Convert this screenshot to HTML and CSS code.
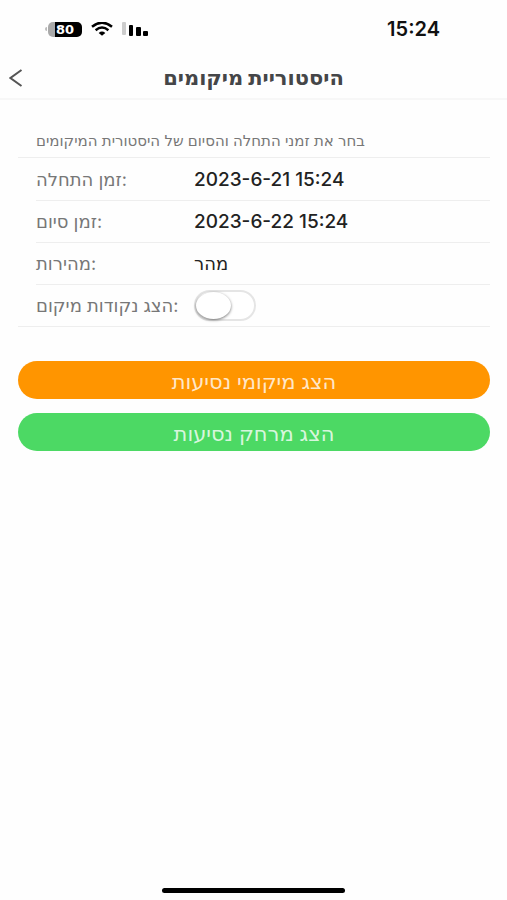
FILE: index.html
```html
<!DOCTYPE html>
<html lang="he" dir="ltr">
<head>
<meta charset="utf-8">
<meta name="viewport" content="width=device-width, initial-scale=1">
<title>היסטוריית מיקומים</title>
<link rel="stylesheet" href="styles.css">
</head>
<body>
<div class="status">
  <div class="indicators">
    <div class="battery"><span class="level">80</span></div>
    <svg class="wifi" width="22" height="14" viewBox="0 0 22 14" aria-hidden="true">
      <path d="M1 4.7Q11-3.3 21 4.7" fill="none" stroke="#000" stroke-width="2.5"/>
      <path d="M4.6 8.2Q11 3 17.4 8.2" fill="none" stroke="#000" stroke-width="2.4"/>
      <path d="M7.7 10.9Q11 8.1 14.3 10.9L11 13.8Z"/>
    </svg>
    <svg class="signal" width="27" height="14" viewBox="0 0 27 14" aria-hidden="true">
      <rect x="0" y="0" width="4" height="13" rx="1" fill="#ccc"/>
      <rect x="7" y="3" width="4" height="11" rx="1"/>
      <rect x="14" y="5" width="5" height="9" rx="1"/>
      <rect x="21" y="9" width="5" height="5" rx="1"/>
    </svg>
  </div>
  <time class="clock">15:24</time>
</div>
<header class="nav">
  <button class="back" aria-label="חזרה">
    <svg width="14" height="18" viewBox="0 0 14 18" aria-hidden="true"><path d="M12.5 1L1.5 9L12.5 17" fill="none" stroke="#555" stroke-width="2"/></svg>
  </button>
  <h1 class="title">היסטוריית מיקומים</h1>
</header>
<main class="content">
  <p class="hint">בחר את זמני התחלה והסיום של היסטורית המיקומים</p>
  <form class="form">
    <div class="row">
      <label class="label" for="start">זמן התחלה:</label>
      <input class="value" id="start" type="text" value="2023-6-21 15:24">
    </div>
    <div class="row">
      <label class="label" for="end">זמן סיום:</label>
      <input class="value" id="end" type="text" value="2023-6-22 15:24">
    </div>
    <div class="row">
      <label class="label" for="speed">מהירות:</label>
      <select class="value speed" id="speed"><option>מהר</option></select>
    </div>
    <div class="row">
      <label class="label" for="points">הצג נקודות מיקום:</label>
      <input class="toggle" id="points" type="checkbox" role="switch">
    </div>
  </form>
  <div class="actions">
    <button class="action locations">הצג מיקומי נסיעות</button>
    <button class="action distance">הצג מרחק נסיעות</button>
  </div>
</main>
<div class="home"></div>
</body>
</html>
```
FILE: styles.css
```css
* { box-sizing: border-box; }
body {
  margin: 0;
  min-height: 100vh;
  display: flex;
  flex-direction: column;
  background: #fefefe;
  color: #222;
  font-family: Inter, "DejaVu Sans", sans-serif;
  font-size: 19px;
}
button, input, select { font: inherit; }
.status {
  display: flex;
  align-items: center;
  justify-content: space-between;
  height: 58px;
  padding: 0 67px 0 45px;
}
.indicators { display: flex; align-items: center; gap: 9px; }
.battery { display: flex; align-items: center; gap: 1px; }
.battery::before {
  content: "";
  width: 2px;
  height: 4px;
  border-radius: 2px 0 0 2px;
  background: #bbb;
}
.level {
  width: 34px;
  height: 15px;
  border-radius: 5px;
  background: linear-gradient(to right, #aaa 20%, #000 20%);
  color: #fff;
  font-family: "DejaVu Sans", sans-serif;
  font-size: 13px;
  font-weight: 700;
  line-height: 15px;
  text-align: center;
}
.clock { font-size: 20px; font-weight: 600; color: #111; }
.nav {
  display: grid;
  grid-template-columns: 40px 1fr 40px;
  align-items: center;
  height: 42px;
  border-bottom: 2px solid #f7f7f7;
}
.back {
  display: flex;
  padding: 0 0 0 9px;
  border: 0;
  background: none;
}
.title {
  margin: 0;
  color: #454648;
  font-size: 21px;
  font-weight: 700;
  line-height: 24px;
  text-align: center;
}
.content { flex: 1; padding: 32px 17px 0 18px; }
.hint {
  margin: 0;
  padding-left: 18px;
  color: #777;
  font-size: 15px;
  line-height: 18px;
}
.form {
  margin-top: 7px;
  border-top: 1px solid #eee;
  border-bottom: 1px solid #eee;
}
.row {
  display: flex;
  align-items: center;
  height: 42px;
  margin-left: 18px;
}
.row + .row { border-top: 1px solid #eee; }
.label { width: 158px; color: #777; font-size: 18px; white-space: nowrap; }
.value {
  flex: 1;
  min-width: 0;
  padding: 0;
  border: 0;
  outline: 0;
  background: none;
  color: #222;
  font-weight: 500;
  appearance: none;
}
.speed { font-size: 18px; }
.toggle {
  appearance: none;
  width: 62px;
  height: 31px;
  margin: 0;
  border: 2px solid #e5e5e5;
  border-radius: 16px;
  background: #fff;
}
.toggle::before {
  content: "";
  display: block;
  width: 35px;
  height: 27px;
  border-radius: 50%;
  background: #fff;
  box-shadow: 0 1px 3px #0008;
}
.toggle:checked { background: #4cd964; }
.toggle:checked::before { margin-left: 23px; }
.actions { display: grid; gap: 14px; margin-top: 34px; }
.action {
  height: 38px;
  padding: 2px 0 0;
  border: 0;
  border-radius: 20px;
  color: #fffc;
  font-size: 21px;
}
.locations { background: #ff9500; }
.distance { background: #4cd964; }
.home {
  width: 36%;
  height: 5px;
  margin: 0 auto 7px;
  border-radius: 3px;
  background: #000;
}
```
